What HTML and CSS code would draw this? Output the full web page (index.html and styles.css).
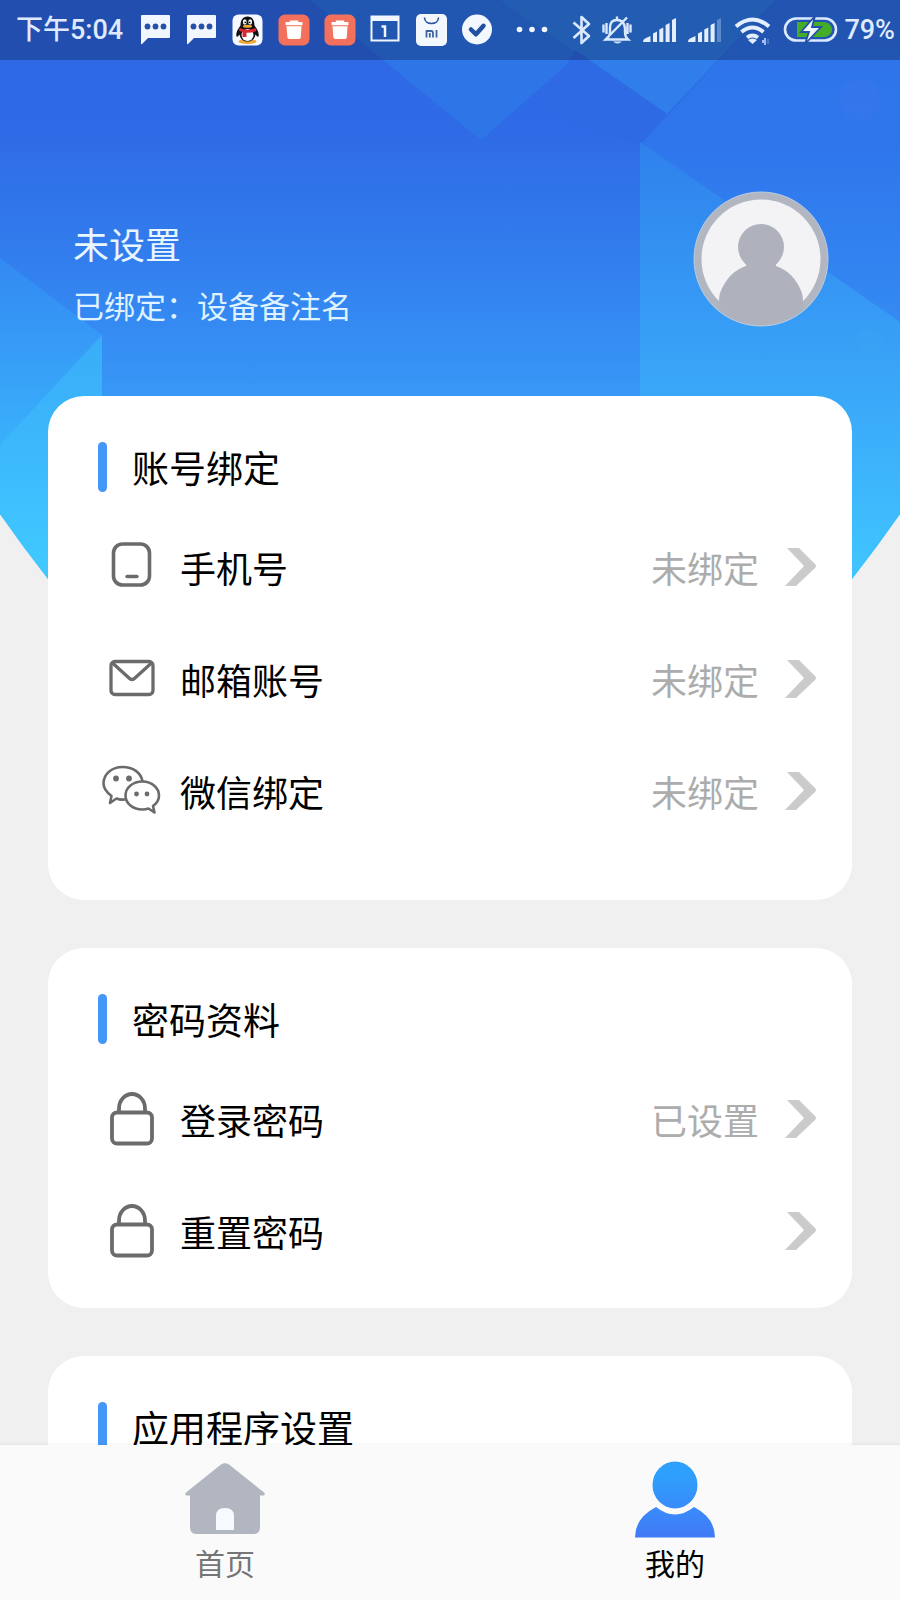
FILE: index.html
```html
<!DOCTYPE html>
<html lang="zh-CN">
<head>
<meta charset="utf-8">
<meta name="viewport" content="width=device-width, initial-scale=1">
<title>我的</title>
<link rel="stylesheet" href="styles.css">
</head>
<body>
<svg class="symbols" aria-hidden="true">
  <symbol id="chat" viewBox="0 0 32 34">
    <path fill="#f1f6ff" d="M2 2h27q1 0 1 1v21q0 1-1 1H8l-6 6q-1 1-1-1V3q0-1 1-1z"/>
    <g fill="#2450a8"><circle cx="7.500" cy="13.500" r="2.900"/><circle cx="15.500" cy="13.500" r="2.900"/><circle cx="23.500" cy="13.500" r="2.900"/></g>
  </symbol>
  <symbol id="trash" viewBox="0 0 34 34">
    <rect x="0.500" y="0.500" width="33" height="33" rx="7" fill="#f2705c"/>
    <path fill="#fff" d="M8 8.500h4.500V7h9v1.500H26V12H8zM9 13h16l-.800 12q-.200 1.500-2 1.500H12q-1.800 0-2-1.500z"/>
  </symbol>
  <symbol id="signal" viewBox="0 0 35 28">
    <path d="M1 26q0-3 3-4l4.500-2v6zM11 17.500l4-2V26h-4zM17.300 13.500l4-2V26h-4zM23.600 9l4-2v19h-4z"/>
  </symbol>
  <symbol id="chevron" viewBox="0 0 32 40">
    <path fill="#cbcbcb" d="M3 1h12l16 16q2 2 0 4L12 39H1l19-20z"/>
  </symbol>
  <symbol id="lock" viewBox="0 0 60 60">
    <g fill="none" stroke="#6b6b6b" stroke-width="3.800"><rect x="10" y="23.500" width="40" height="31" rx="5"/><path d="M17 23.500v-4a13 14.500 0 0 1 26 0v4"/></g>
  </symbol>
</svg>

<svg class="backdrop" viewBox="0 0 900 620" preserveAspectRatio="none" aria-hidden="true">
  <defs>
    <linearGradient id="base" gradientUnits="userSpaceOnUse" x1="0" y1="0" x2="0" y2="620"><stop offset="0" stop-color="#2f68e6"/><stop offset=".22" stop-color="#2f6be6"/><stop offset=".42" stop-color="#327eee"/><stop offset=".64" stop-color="#3898f7"/><stop offset="1" stop-color="#40c8ff"/></linearGradient>
    <linearGradient id="light" gradientUnits="userSpaceOnUse" x1="0" y1="140" x2="0" y2="570"><stop offset="0" stop-color="#2f80ec"/><stop offset=".55" stop-color="#39a5f8"/><stop offset="1" stop-color="#40c4ff"/></linearGradient>
    <linearGradient id="upper" gradientUnits="userSpaceOnUse" x1="0" y1="0" x2="0" y2="330"><stop offset="0" stop-color="#2e72e8"/><stop offset=".45" stop-color="#2f76ec"/><stop offset="1" stop-color="#348bf3"/></linearGradient>
    <linearGradient id="facet" gradientUnits="userSpaceOnUse" x1="0" y1="260" x2="0" y2="445"><stop offset="0" stop-color="#338af2"/><stop offset="1" stop-color="#3ab0fb"/></linearGradient>
    <linearGradient id="facet2" gradientUnits="userSpaceOnUse" x1="0" y1="337" x2="0" y2="560"><stop offset="0" stop-color="#3aadf8"/><stop offset=".5" stop-color="#3cb8fc"/><stop offset="1" stop-color="#40c8ff"/></linearGradient>
    <clipPath id="curve"><path d="M0 0H900V514Q877 547 852 579L800 620H100L48 579Q23 547 0 514z"/></clipPath>
  </defs>
  <g clip-path="url(#curve)">
    <path fill="url(#base)" d="M0 0H900V620H0z"/>
    <path fill="#2e76e8" d="M310 0H640L481 140z"/>
    <path fill="url(#upper)" d="M775 0H900V340L640 145z"/>
    <path fill="#2f7eea" d="M500 0H775L666 115z"/>
    <path fill="#2f6ae5" d="M575 50L666 113 640 145 540 110z"/>
    <path fill="url(#light)" d="M640 142L900 322V620H640z"/>
    <path fill="url(#facet)" d="M0 258L102 335 0 448z"/>
    <path fill="url(#facet2)" d="M102 335V620H0V445z"/>
    <circle cx="860" cy="100" r="21" fill="#3b77ec" opacity=".4"/>
    <circle cx="870" cy="342" r="13" fill="#3ea7f4" opacity=".35"/>
  </g>
</svg>

<div class="status">
  <span class="status-text">下午5:04</span>
  <div class="notices">
    <svg viewBox="0 0 32 34"><use href="#chat"/></svg>
    <svg viewBox="0 0 32 34"><use href="#chat"/></svg>
    <svg viewBox="0 0 32 34">
      <rect x="0.500" y="1.500" width="30" height="31" rx="6" fill="#f6f9ff"/>
      <ellipse cx="15.500" cy="28.500" rx="9" ry="2.500" fill="#eda83a"/>
      <path fill="#111" d="M15.500 3.500c5 0 7 4 7 9 3 4 5 8 4 11-1 1-2-1-3-2-1 5-4 7-8 7s-7-2-8-7c-1 1-2 3-3 2-1-3 1-7 4-11 0-5 2-9 7-9z"/>
      <ellipse cx="15.500" cy="22" rx="6" ry="6" fill="#fff"/>
      <ellipse cx="12.800" cy="9" rx="1.900" ry="2.700" fill="#fff"/><ellipse cx="18.200" cy="9" rx="1.900" ry="2.700" fill="#fff"/>
      <circle cx="13.300" cy="9.300" r=".9"/><circle cx="17.700" cy="9.300" r=".9"/>
      <ellipse cx="15.500" cy="13.300" rx="4.600" ry="1.500" fill="#f0ab35"/>
      <path fill="#d92635" d="M7.500 15q8 3.500 16 0l1 3q-5 2-10 1.800V24h-4v-5l-3.500-1.200z"/>
    </svg>
    <svg viewBox="0 0 34 34"><use href="#trash"/></svg>
    <svg viewBox="0 0 34 34"><use href="#trash"/></svg>
    <svg viewBox="0 0 32 34">
      <path fill="none" stroke="#f1f6ff" stroke-width="2" d="M1.500 3.500h27v24h-27z"/><path fill="#f1f6ff" d="M1 3h28v5H1z"/>
      <path fill="none" stroke="#f1f6ff" stroke-width="2.500" d="M11.500 13.500h3.500V24"/>
    </svg>
    <svg viewBox="0 0 32 34">
      <rect y="1" width="31" height="32" rx="5" fill="#f3f8ff"/>
      <path fill="none" stroke="#2852a2" stroke-width="1.600" d="M8.500 4.500c0 8 14 8 14 0"/>
      <path fill="none" stroke="#3d639f" stroke-width="1.800" d="M10.500 24.500V18h4.500q2 0 2 2v4.500M13.800 20v4.500M20.500 17v7.500"/>
    </svg>
    <svg viewBox="0 0 32 34"><circle cx="15" cy="16.500" r="15" fill="#f3f8ff"/><path fill="none" stroke="#2450a2" stroke-width="4.500" stroke-linecap="round" stroke-linejoin="round" d="M9 16.500l5 4.800 7.500-8.500"/></svg>
    <svg class="more" viewBox="0 0 32 34"><g fill="#f1f6ff"><circle cx="3.500" cy="16.500" r="2.800"/><circle cx="16" cy="16.500" r="2.800"/><circle cx="28.500" cy="16.500" r="2.800"/></g></svg>
  </div>
  <div class="signals">
    <svg class="w20" viewBox="0 0 20 34"><path fill="none" stroke="#dbe9ff" stroke-width="2.600" stroke-linejoin="round" d="M1.500 9.500L17 23l-7.500 7V4L17 11 1.500 25"/></svg>
    <svg class="w30" viewBox="0 0 30 34"><g fill="none" stroke="#dbe9ff" stroke-width="2.400"><path d="M4 26.500q4-3 4-8V15q0-8 7-8 7 0 8 8v4q0 5 3 7.500zM15 3.500V7M1.500 11.500v8M28.500 11.500v8M4.500 10v11M25.500 10v11M2.500 27.500L25 4.500"/></g><path fill="#dbe9ff" d="M11 28.500h9q-4.500 4-9 0z"/></svg>
    <svg class="w35" viewBox="0 0 35 28" fill="#e4eeff"><use href="#signal"/><path d="M30 4l4-2v24h-4z"/></svg>
    <svg class="w35" viewBox="0 0 35 28" fill="#e4eeff"><use href="#signal"/><path opacity=".3" d="M30 4l4-2v24h-4z"/></svg>
    <svg class="w40" viewBox="0 0 40 34"><g fill="none" stroke="#e4eeff" stroke-width="4"><path d="M4 13.500q16.500-14 33 0M9.500 19q11-9 22 0M15 24.500q5.500-4 11 0"/></g><path fill="#e4eeff" d="M16 27q4.500-3 9 0l-4.500 4z"/><path stroke="#cfe0ff" stroke-width="1.500" d="M31 27v3M33 25v7"/><path stroke="#cfe0ff" opacity=".35" stroke-width="1.500" d="M36 26v5"/></svg>
    <div class="power">
      <svg class="w58" viewBox="0 0 58 34"><rect x="3" y="5.500" width="51" height="22" rx="11" fill="none" stroke="#dde9ff" stroke-width="2.600"/><path fill="#45ac28" d="M15 9h28q7 2 7 7.500T43 24H15z"/><path fill="#f2f7ff" stroke="#2450a8" stroke-width="1.800" d="M33 3L19 19h8l-4 12 16-17h-9z"/></svg>
      <span class="status-text">79%</span>
    </div>
  </div>
</div>

<main class="page">
  <header class="profile">
    <div class="who">
      <h1 class="name">未设置</h1>
      <p class="bound">已绑定：设备备注名</p>
    </div>
    <svg class="avatar" viewBox="0 0 136 136" role="img" aria-label="头像">
      <defs><clipPath id="disc"><circle cx="68" cy="68" r="66"/></clipPath></defs>
      <circle cx="68" cy="68" r="67" fill="#b1b6c1" stroke="#b9cbe4"/>
      <circle cx="68" cy="68" r="59.500" fill="#f3f3f5"/>
      <g fill="#afb2bd" clip-path="url(#disc)"><circle cx="68" cy="56" r="23"/><path d="M53 70h30v5q18 6 26 27 1 4 1 8v30H26v-30q0-4 1-8 8-21 26-27z"/></g>
    </svg>
  </header>

  <section class="card card-tall">
    <h2 class="title">账号绑定</h2>
    <button class="row" type="button">
      <svg class="icon" viewBox="0 0 60 60"><rect x="11.500" y="7" width="36" height="41" rx="9" fill="none" stroke="#6b6b6b" stroke-width="3.600"/><path stroke="#6b6b6b" stroke-width="3.400" stroke-linecap="round" d="M25 39.500h10"/></svg>
      <span class="label">手机号</span><span class="value">未绑定</span>
      <svg class="chevron" viewBox="0 0 32 40"><use href="#chevron"/></svg>
    </button>
    <button class="row" type="button">
      <svg class="icon" viewBox="0 0 60 60"><rect x="9" y="12.500" width="42" height="33" rx="4" fill="none" stroke="#6b6b6b" stroke-width="3.300"/><path fill="none" stroke="#6b6b6b" stroke-width="3.300" d="M10.500 14L27 29q3 3 6 0l16.500-15"/></svg>
      <span class="label">邮箱账号</span><span class="value">未绑定</span>
      <svg class="chevron" viewBox="0 0 32 40"><use href="#chevron"/></svg>
    </button>
    <button class="row" type="button">
      <svg class="icon" viewBox="0 0 60 60"><g fill="none" stroke="#6b6b6b" stroke-width="2.600" stroke-linejoin="round"><path d="M23 38.500q-5 .5-8.500-1L8 42l1.500-7Q1.500 29 1.500 22.500C1.500 12.500 10.500 6 20.500 6c10.500 0 18.500 5.500 20 14.500"/><path d="M40.500 20.500c9.500 0 16.500 6.500 16.500 14 0 5-2.500 8-6 10.500l1.500 6.500-6-4q-3 1-6 1c-9.500 0-17-6-17-14s7.500-14 17-14z"/></g><g fill="#6b6b6b"><circle cx="14" cy="17.500" r="2.900"/><circle cx="27" cy="17.500" r="2.900"/><circle cx="34.500" cy="33" r="2.400"/><circle cx="45" cy="33" r="2.400"/></g></svg>
      <span class="label">微信绑定</span><span class="value">未绑定</span>
      <svg class="chevron" viewBox="0 0 32 40"><use href="#chevron"/></svg>
    </button>
  </section>

  <section class="card">
    <h2 class="title">密码资料</h2>
    <button class="row" type="button">
      <svg class="icon" viewBox="0 0 60 60"><use href="#lock"/></svg>
      <span class="label">登录密码</span><span class="value">已设置</span>
      <svg class="chevron" viewBox="0 0 32 40"><use href="#chevron"/></svg>
    </button>
    <button class="row" type="button">
      <svg class="icon" viewBox="0 0 60 60"><use href="#lock"/></svg>
      <span class="label">重置密码</span>
      <svg class="chevron" viewBox="0 0 32 40"><use href="#chevron"/></svg>
    </button>
  </section>

  <section class="card">
    <h2 class="title">应用程序设置</h2>
  </section>
</main>

<nav class="tabs">
  <a class="tab" href="#home">
    <svg class="tab-icon" viewBox="0 0 80 80"><path fill="#b1b6c0" d="M36 4.500q4-2.500 8 0l35 28q2 3-1 3h-3v32q0 6.500-6 6.500H11q-6 0-6-6.500v-32H2q-3 0-1-3z"/><path fill="#f6f9fe" d="M31 70V56q0-8 9-8t9 8v14z"/></svg>
    <span>首页</span>
  </a>
  <a class="tab tab-active" href="#mine" aria-current="page">
    <svg class="tab-icon" viewBox="0 0 80 80"><defs><linearGradient id="person" gradientUnits="userSpaceOnUse" x1="0" y1="0" x2="0" y2="80"><stop offset=".2" stop-color="#2f9ffd"/><stop offset="1" stop-color="#4278f6"/></linearGradient></defs><g fill="url(#person)"><ellipse cx="40" cy="25" rx="22.500" ry="23.500"/><path d="M21 47q19 15 38 0 21 11 21 30.500H0Q0 58 21 47z"/></g></svg>
    <span>我的</span>
  </a>
</nav>
</body>
</html>
```
FILE: styles.css
```css
* {
  box-sizing: border-box;
}

body {
  position: relative;
  display: flex;
  flex-direction: column;
  height: 100vh;
  margin: 0;
  overflow: hidden;
  background: #f0f0f0;
  color: #000;
  font-family: "Noto Sans CJK SC", sans-serif;
}

h1,
h2,
p {
  margin: 0;
  font-weight: 400;
}

svg {
  display: block;
  flex: none;
}

.symbols {
  position: absolute;
  width: 0;
  height: 0;
}

.backdrop {
  position: absolute;
  top: 0;
  left: 0;
  z-index: -1;
  width: 100%;
  height: 620px;
}

/* Status bar */
.status {
  display: flex;
  flex: none;
  align-items: center;
  height: 60px;
  padding: 0 5px 0 16px;
  background: rgba(10, 30, 70, 0.34);
}

.status-text {
  color: #dfeaff;
  font-family: Roboto, "Noto Sans CJK SC", sans-serif;
  font-size: 27px;
  font-weight: 500;
  line-height: 36px;
  white-space: nowrap;
}

.notices {
  display: flex;
  gap: 14px;
  margin-left: 17px;
}

.notices svg {
  width: 32px;
  height: 34px;
}

.notices .more {
  margin-left: 8px;
}

.signals {
  display: flex;
  align-items: center;
  gap: 10px;
  margin-left: auto;
}

.signals svg {
  height: 34px;
}

.w20 { width: 20px; }
.w30 { width: 30px; }
.w35 { width: 35px; }
.w40 { width: 40px; }
.w58 { width: 58px; }

.power {
  display: flex;
  align-items: center;
  gap: 4px;
}

/* Scrolling page */
.page {
  display: flex;
  flex: 1;
  flex-direction: column;
  gap: 48px;
  min-height: 0;
  padding: 0 48px;
  overflow: auto;
  scrollbar-width: none;
}

.profile {
  display: flex;
  flex: none;
  align-items: flex-start;
  justify-content: space-between;
  height: 288px;
  padding: 131px 23px 0 25px;
}

.who {
  padding-top: 24px;
}

.name {
  color: #e8f6ff;
  font-size: 36px;
  line-height: 56px;
}

.bound {
  margin-top: 10px;
  color: #dff2ff;
  font-size: 31px;
  line-height: 48px;
}

.avatar {
  width: 136px;
  height: 136px;
}

.card {
  flex: none;
  padding: 46px 36px 21px 50px;
  border-radius: 36px;
  background: #fff;
}

.card-tall {
  padding-bottom: 53px;
}

.title {
  display: flex;
  align-items: center;
  gap: 25px;
  height: 50px;
  margin-bottom: 19px;
  font-size: 37px;
  line-height: 48px;
}

.title::before {
  width: 9px;
  height: 50px;
  border-radius: 5px;
  background: #4496f7;
  content: "";
}

.row {
  display: flex;
  align-items: center;
  width: 100%;
  height: 112px;
  padding: 0 0 0 4px;
  border: 0;
  background: none;
  color: #000;
  font: inherit;
  font-size: 36px;
  text-align: left;
}

.icon {
  width: 60px;
  height: 60px;
}

.label {
  flex: 1;
  margin-left: 18px;
}

.value {
  color: #acacac;
}

.chevron {
  width: 32px;
  height: 40px;
  margin-left: 25px;
}

/* Bottom tabs */
.tabs {
  display: flex;
  flex: none;
  height: 155px;
  background: #fafafa;
  box-shadow: 0 -1px 3px rgba(0, 0, 0, 0.05);
}

.tab {
  display: flex;
  flex: 1;
  flex-direction: column;
  align-items: center;
  padding-top: 15px;
  color: #757575;
  font-size: 30px;
  line-height: 44px;
  text-decoration: none;
}

.tab-active {
  color: #000;
}

.tab-icon {
  width: 80px;
  height: 80px;
}
```
